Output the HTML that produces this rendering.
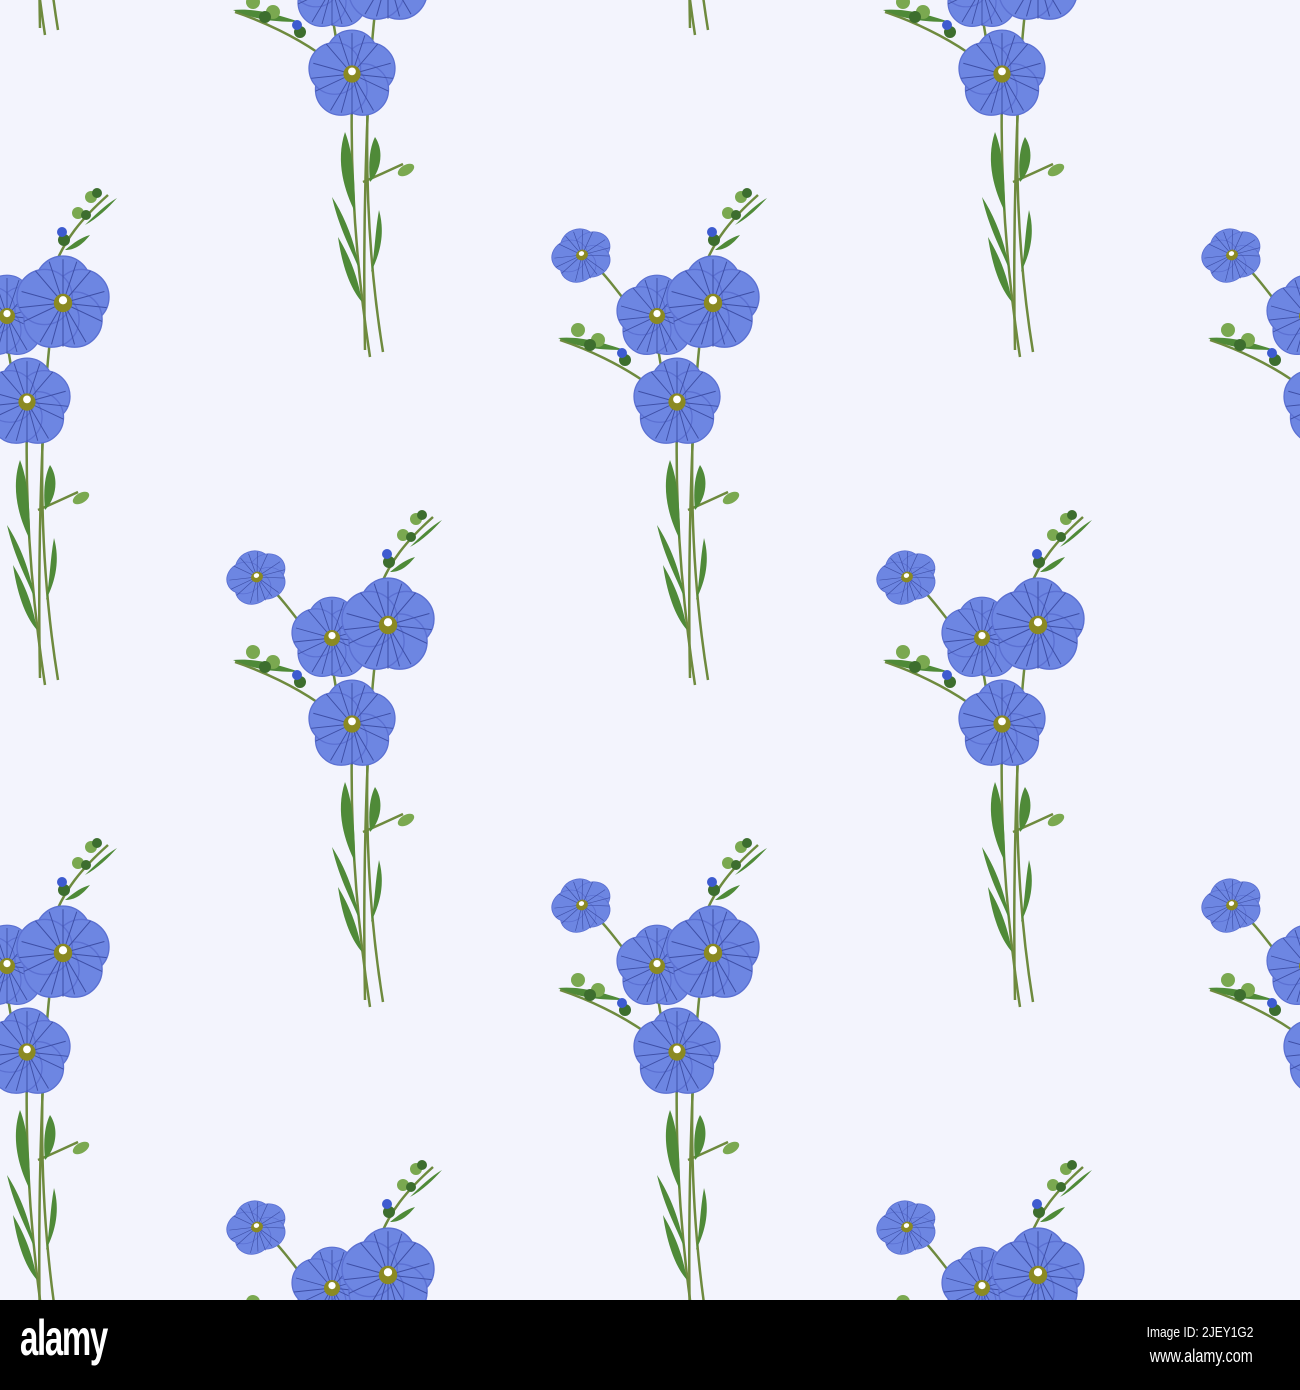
<!DOCTYPE html>
<html style="overflow:hidden"><head><style>
html,body{margin:0;width:1300px;height:1390px;overflow:hidden}
body{background:#f3f4fd;font-family:"Liberation Sans",sans-serif;position:relative}
#bar{position:absolute;left:0;top:1300px;width:1300px;height:90px;background:#000;overflow:hidden}
.logo{position:absolute;left:20px;top:10px;color:#fff;font-weight:bold;font-size:50px;line-height:56px;letter-spacing:-2px;transform:scaleX(0.66);transform-origin:left top}
.r{position:absolute;right:47px;color:#fff;transform:scaleX(0.8);transform-origin:right top;white-space:nowrap;line-height:18px}
</style></head><body>
<svg width="1300" height="1300" style="position:absolute;left:0;top:0;display:block">
<defs>
<g id="fl">
 <g fill="#6d86e2" stroke="#5b70d2" stroke-width="0.03">
  <circle cx="0" cy="-0.42" r="0.6"/>
  <circle cx="0.4" cy="-0.13" r="0.6"/>
  <circle cx="0.25" cy="0.36" r="0.6"/>
  <circle cx="-0.25" cy="0.36" r="0.6"/>
  <circle cx="-0.4" cy="-0.13" r="0.6"/>
 </g>
 <g stroke="#3e4fa6" stroke-width="0.022" fill="none">
  <path d="M0 0L0 -0.95M0 0L0.6 -0.7M0 0L0.9 -0.25M0 0L0.85 0.4M0 0L0.5 0.85M0 0L0 0.95M0 0L-0.5 0.85M0 0L-0.85 0.4M0 0L-0.9 -0.25M0 0L-0.6 -0.7M0 0L0.3 -0.9M0 0L-0.3 -0.9M0 0L0.95 0.1M0 0L-0.95 0.1M0 0L0.25 0.9M0 0L-0.25 0.9"/>
 </g>
 <circle r="0.2" fill="#8b8a22"/>
 <circle cx="0" cy="-0.06" r="0.09" fill="#fff"/>
</g>
<g id="bq">
 <g fill="none" stroke="#6e8a3e" stroke-width="2.5">
  <path d="M147 240 C145 330 152 420 165 505"/>
  <path d="M163 240 C160 330 165 420 178 500"/>
  <path d="M170 160 C160 250 158 400 160 498"/>
  <path d="M127 160 C132 200 140 225 147 240"/>
  <path d="M65 85 C85 105 100 130 127 160"/>
  <path d="M158 330 C170 325 185 318 198 312"/>
  <path d="M175 85 C185 60 200 40 228 15"/>
  <path d="M30 160 C60 170 90 185 112 200"/>
 </g>
 <g fill="#4f8a38">
  <path d="M140 280 C130 310 140 340 150 360 C150 330 148 300 140 280Z"/>
  <path d="M170 285 C180 300 175 320 165 330 C163 310 165 295 170 285Z"/>
  <path d="M127 345 C135 380 148 400 155 420 C150 390 140 365 127 345Z"/>
  <path d="M133 385 C138 420 148 440 157 450 C152 420 142 400 133 385Z"/>
  <path d="M174 358 C170 380 170 400 166 420 C176 400 180 380 174 358Z"/>
  <path d="M28 158 C50 156 70 162 95 170 C70 170 50 168 28 158Z"/>
  <path d="M205 45 C215 35 225 25 237 18 C228 28 218 38 205 45Z"/>
  <path d="M185 70 C195 62 200 58 210 55 C202 65 195 70 185 70Z"/>
 </g>
 <g fill="#7aa850">
  <ellipse cx="201" cy="318" rx="9" ry="5" transform="rotate(-30 201 318)"/>
  <circle cx="211" cy="17" r="6"/><circle cx="198" cy="33" r="6"/>
  <circle cx="48" cy="150" r="7"/><circle cx="68" cy="160" r="7"/>
 </g>
 <g fill="#3d6e2e">
  <circle cx="217" cy="13" r="5"/><circle cx="206" cy="35" r="5"/>
  <circle cx="184" cy="60" r="6"/><circle cx="60" cy="165" r="6"/><circle cx="95" cy="180" r="6"/>
 </g>
 <circle cx="92" cy="173" r="5" fill="#3d5bd0"/>
 <circle cx="182" cy="52" r="5" fill="#3d5bd0"/>
 <use href="#fl" transform="translate(52 75) rotate(-20) scale(30 26)"/>
 <use href="#fl" transform="translate(127 136) scale(40)"/>
 <use href="#fl" transform="translate(183 123) scale(46)"/>
 <use href="#fl" transform="translate(147 222) scale(43)"/>
</g>
</defs>
<rect width="1300" height="1300" fill="#f3f4fd"/>
<g>
<use href="#bq" x="-120" y="-470"/><use href="#bq" x="-120" y="180"/><use href="#bq" x="-120" y="830"/>
<use href="#bq" x="205" y="-148"/><use href="#bq" x="205" y="502"/><use href="#bq" x="205" y="1152"/>
<use href="#bq" x="530" y="-470"/><use href="#bq" x="530" y="180"/><use href="#bq" x="530" y="830"/>
<use href="#bq" x="855" y="-148"/><use href="#bq" x="855" y="502"/><use href="#bq" x="855" y="1152"/>
<use href="#bq" x="1180" y="-470"/><use href="#bq" x="1180" y="180"/><use href="#bq" x="1180" y="830"/>
</g>
</svg>
<div id="bar">
 <div class="logo">alamy</div>
 <div class="r" style="top:24px;font-size:15px">Image ID: 2JEY1G2</div>
 <div class="r" style="top:47px;font-size:18px">www.alamy.com</div>
</div>
</body></html>
